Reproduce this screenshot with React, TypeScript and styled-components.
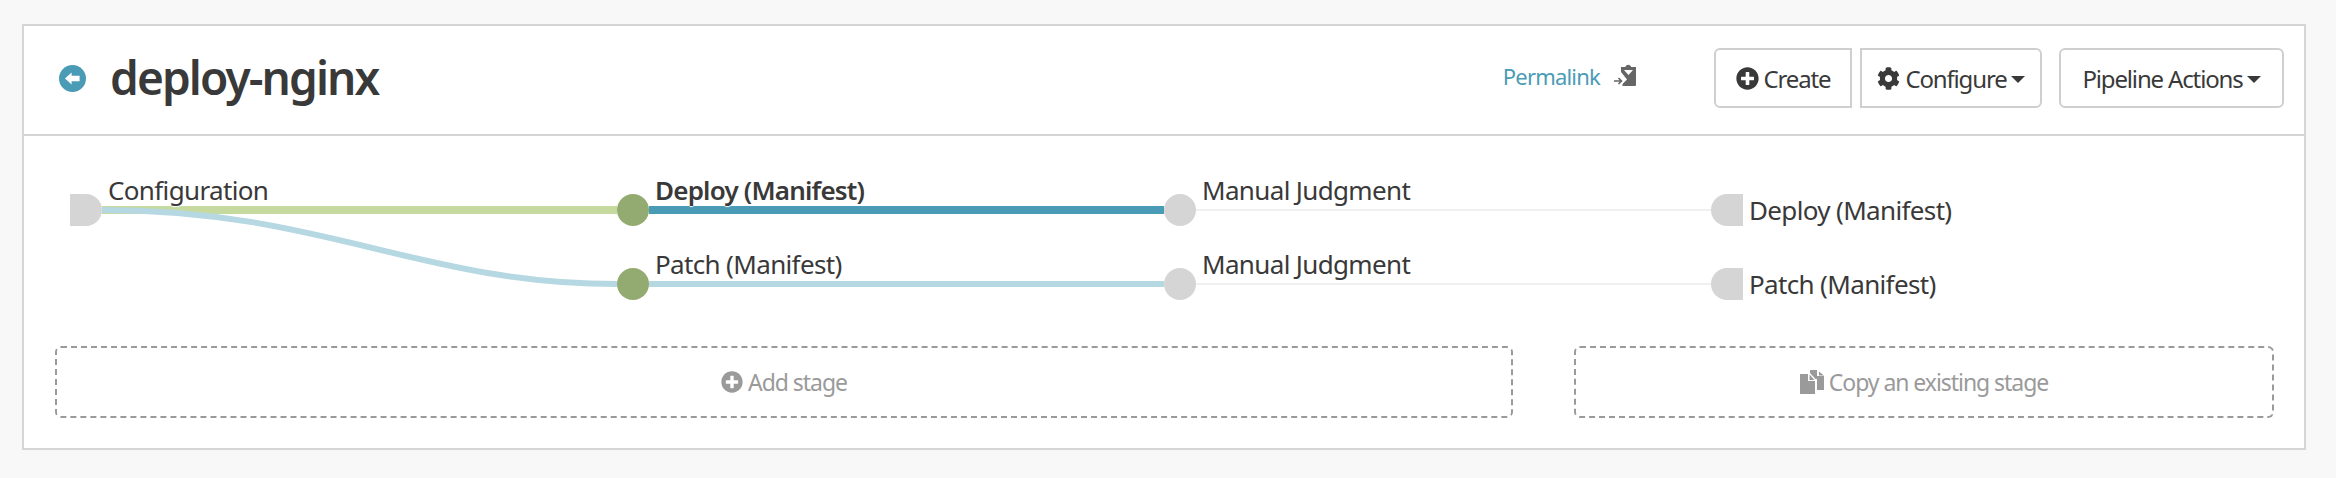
import React from "react";
import styled, { createGlobalStyle } from "styled-components";
import { FaPlusCircle, FaCog } from "react-icons/fa";

const GlobalStyle = createGlobalStyle`
  html, body {
    margin: 0;
    padding: 0;
    background: #f8f8f8;
  }
  body {
    font-family: "Noto Sans", "Open Sans", sans-serif;
    color: #393939;
  }
`;

const Page = styled.div`
  width: 2336px;
  height: 478px;
  box-sizing: border-box;
  padding: 24px 30px 28px 22px;
`;

const Panel = styled.section`
  height: 426px;
  box-sizing: border-box;
  border: 2px solid #d5d5d5;
  background: #fff;
  display: flex;
  flex-direction: column;
`;

const Header = styled.header`
  height: 110px;
  box-sizing: border-box;
  flex: none;
  border-bottom: 2px solid #d5d5d5;
  display: flex;
  align-items: center;
  padding: 0 20px 4px 35px;
`;

const BackButton = styled.svg`
  width: 27px;
  height: 27px;
  flex: none;
`;

const Title = styled.h1`
  margin: -2px 0 0 24px;
  font-size: 46px;
  font-weight: 600;
  letter-spacing: -1.9px;
  color: #393939;
`;

const Permalink = styled.a`
  margin-left: auto;
  font-size: 22px;
  letter-spacing: -0.8px;
  color: #4a9bb6;
  margin-top: -4px;
`;

const ClipboardIcon = styled.svg`
  width: 24px;
  height: 24px;
  margin: -4px 77px 0 13px;
  flex: none;
`;

const Buttons = styled.div`
  display: flex;
`;

const Button = styled.button<{ $w: number; $gap?: number; $side?: "left" | "right" }>`
  width: ${(p) => p.$w}px;
  height: 60px;
  margin-left: ${(p) => p.$gap ?? 0}px;
  box-sizing: border-box;
  background: #fff;
  border: 2px solid #cfcfcf;
  border-radius: ${(p) =>
    p.$side === "left" ? "6px 0 0 6px" : p.$side === "right" ? "0 6px 6px 0" : "6px"};
  font: inherit;
  font-size: 24px;
  letter-spacing: -1.15px;
  color: #393939;
  display: flex;
  align-items: center;
  justify-content: center;
  gap: 5px;
  padding: 0;
  svg {
    flex: none;
  }
`;

const Caret = styled.span`
  width: 0;
  height: 0;
  margin-left: -1px;
  margin-top: 3px;
  border-left: 7px solid transparent;
  border-right: 7px solid transparent;
  border-top: 7px solid #393939;
`;

const Graph = styled.div`
  position: relative;
  height: 210px;
  flex: none;
`;

const GraphLines = styled.svg`
  position: absolute;
  left: 0;
  top: 0;
  width: 2280px;
  height: 210px;
`;

const StageLabel = styled.span<{ $x: number; $y: number; $active?: boolean }>`
  position: absolute;
  left: ${(p) => p.$x}px;
  top: ${(p) => p.$y}px;
  line-height: 32px;
  font-size: 26px;
  letter-spacing: ${(p) => (p.$active ? -0.8 : -0.65)}px;
  font-weight: ${(p) => (p.$active ? 600 : 400)};
  color: #393939;
  white-space: nowrap;
  text-shadow: 0 1px 1px #fff;
`;

const Footer = styled.div`
  display: flex;
  gap: 61px;
  padding: 0 30px 0 31px;
`;

const DashedAction = styled.button<{ $w: number }>`
  width: ${(p) => p.$w}px;
  height: 72px;
  box-sizing: border-box;
  flex: none;
  background: #fff;
  border: 2px dashed #9a9a9a;
  border-radius: 6px;
  font: inherit;
  font-size: 23px;
  letter-spacing: -1.05px;
  color: #9a9a9a;
  display: flex;
  align-items: center;
  justify-content: center;
  gap: 5px;
  padding: 0;
`;

const CopyIcon = styled.svg`
  width: 24px;
  height: 24px;
  flex: none;
`;

const NODE_GREY = "#d5d5d5";
const NODE_GREEN = "#93ab70";

const Node = ({ cx, cy, fill }: { cx: number; cy: number; fill: string }) => (
  <ellipse cx={cx} cy={cy} rx={16} ry={16} fill={fill} />
);

// flat on the left, round on the right
const StartNode = ({ x, cy }: { x: number; cy: number }) => (
  <path d={`M${x} ${cy - 16}h16a16 16 0 0 1 0 32h-16z`} fill={NODE_GREY} />
);

// round on the left, flat on the right
const EndNode = ({ x, cy }: { x: number; cy: number }) => (
  <path d={`M${x + 32} ${cy - 16}h-16a16 16 0 0 0 0 32h16z`} fill={NODE_GREY} />
);

export default function App() {
  return (
    <>
      <GlobalStyle />
      <Page>
        <Panel>
          <Header>
            <BackButton viewBox="0 0 27 27">
              <circle cx="13.5" cy="13.5" r="13.5" fill="#4a9bb6" />
              <path d="M6 13.5L12.6 7.4V10.8H20.6V16.2H12.6V19.6Z" fill="#fff" />
            </BackButton>
            <Title>deploy-nginx</Title>
            <Permalink>Permalink</Permalink>
            <ClipboardIcon viewBox="0 0 24 24">
              <path
                fillRule="evenodd"
                d="M8 3H12.5V2.5A3 3 0 0 1 18 2.5V3H23V21a1 1 0 0 1-1 1H9.5V20L14 15.5L8 8ZM11 6L15.5 11L20 6Z"
                fill="#666"
              />
              <path d="M1 17H8M5.5 14L8.5 17L5.5 20" fill="none" stroke="#666" strokeWidth="1.6" />
            </ClipboardIcon>
            <Buttons>
              <Button $w={138} $side="left">
                <FaPlusCircle size={23} />
                Create
              </Button>
              <Button $w={182} $gap={8} $side="right">
                <FaCog size={23} />
                Configure
                <Caret />
              </Button>
              <Button $w={225} $gap={17}>
                Pipeline Actions
                <Caret />
              </Button>
            </Buttons>
          </Header>
          <Graph>
            <GraphLines viewBox="0 0 2280 210">
              <path d="M78 74H593" stroke="#c6da9f" strokeWidth="8" fill="none" />
              <path d="M78 74C300 74 395 148 593 148" stroke="#b5d8e2" strokeWidth="6" fill="none" />
              <path d="M625 74H1140" stroke="#4a9bb6" strokeWidth="8" fill="none" />
              <path d="M625 148H1140" stroke="#b5d8e2" strokeWidth="6" fill="none" />
              <path d="M1172 74H1687" stroke="#f0f0f0" strokeWidth="2" fill="none" />
              <path d="M1172 148H1687" stroke="#f0f0f0" strokeWidth="2" fill="none" />
              <StartNode x={46} cy={74} />
              <Node cx={609} cy={74} fill={NODE_GREEN} />
              <Node cx={609} cy={148} fill={NODE_GREEN} />
              <Node cx={1156} cy={74} fill={NODE_GREY} />
              <Node cx={1156} cy={148} fill={NODE_GREY} />
              <EndNode x={1687} cy={74} />
              <EndNode x={1687} cy={148} />
            </GraphLines>
            <StageLabel $x={84} $y={38}>Configuration</StageLabel>
            <StageLabel $x={631} $y={38} $active>Deploy (Manifest)</StageLabel>
            <StageLabel $x={631} $y={112}>Patch (Manifest)</StageLabel>
            <StageLabel $x={1178} $y={38}>Manual Judgment</StageLabel>
            <StageLabel $x={1178} $y={112}>Manual Judgment</StageLabel>
            <StageLabel $x={1725} $y={58}>Deploy (Manifest)</StageLabel>
            <StageLabel $x={1725} $y={132}>Patch (Manifest)</StageLabel>
          </Graph>
          <Footer>
            <DashedAction $w={1458}>
              <FaPlusCircle size={22} />
              Add stage
            </DashedAction>
            <DashedAction $w={700}>
              <CopyIcon viewBox="0 0 24 24">
                <path d="M0 4H8V11H15V24H0Z" fill="#9a9a9a" />
                <path d="M9.5 4.5L14.5 10H9.5Z" fill="#9a9a9a" />
                <path d="M10 0H17V6H24V20H17V9H15.5L10 3Z" fill="#9a9a9a" />
                <path d="M19 1.5L24 5.5H19Z" fill="#9a9a9a" />
              </CopyIcon>
              Copy an existing stage
            </DashedAction>
          </Footer>
        </Panel>
      </Page>
    </>
  );
}
